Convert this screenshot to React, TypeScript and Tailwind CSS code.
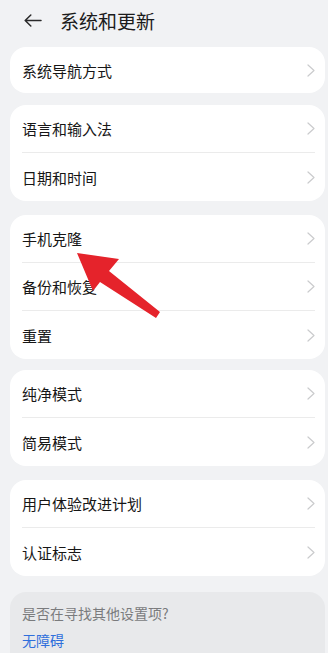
import React from "react";

const groups: string[][] = [
  ["系统导航方式"],
  ["语言和输入法", "日期和时间"],
  ["手机克隆", "备份和恢复", "重置"],
  ["纯净模式", "简易模式"],
  ["用户体验改进计划", "认证标志"],
];

// gap above each card, measured from the screenshot
const gaps = ["mt-0", "mt-[12px]", "mt-[14px]", "mt-[11px]", "mt-[14px]"];

function Chevron() {
  return (
    <svg width="8" height="13" viewBox="0 0 8 13" fill="none" className="shrink-0">
      <polyline
        points="1,1 7,6.5 1,12"
        stroke="#cacbcd"
        strokeWidth="1.2"
        strokeLinecap="round"
        strokeLinejoin="round"
      />
    </svg>
  );
}

function Row({ label, last, first }: { label: string; last: boolean; first: boolean }) {
  return (
    <div className="pl-3 pr-[10px]">
      <div
        className={
          "flex items-center justify-between " +
          (first && last ? "h-[46px] " : "h-[48px] ") +
          (last ? "" : "border-b border-[#ebebeb]")
        }
      >
        <span className="text-[15px] text-[#161616] leading-none">{label}</span>
        <Chevron />
      </div>
    </div>
  );
}

export default function App() {
  return (
    <div
      className="relative w-[328px] h-[653px] overflow-hidden bg-[#f1f2f4] flex flex-col"
      style={{ fontFamily: '"Noto Sans CJK SC", "Noto Sans", sans-serif' }}
    >
      <header className="h-[47px] flex items-center pl-[24px] pb-[6px] gap-[18px] shrink-0">
        <svg width="18" height="13" viewBox="0 0 18 13" fill="none">
          <path
            d="M17 6.5H1.5M6.8 1L1.2 6.5L6.8 12"
            stroke="#2a2a2a"
            strokeWidth="1.5"
            strokeLinecap="round"
            strokeLinejoin="round"
          />
        </svg>
        <h1 className="text-[19px] text-[#1b1b1b] leading-none">系统和更新</h1>
      </header>

      {groups.map((rows, gi) => (
        <div key={gi} className={"ml-[10px] mr-[3px] bg-white rounded-[16px] shrink-0 " + gaps[gi]}>
          {rows.map((label, ri) => (
            <Row key={label} label={label} first={ri === 0} last={ri === rows.length - 1} />
          ))}
        </div>
      ))}

      <div className="ml-[10px] mr-[3px] mt-[16px] flex-1 bg-[#e8e9eb] rounded-t-[16px] px-3 pt-[12px]">
        <p className="text-[14px] text-[#7a7b7d] leading-[18px]">是否在寻找其他设置项?</p>
        <p className="mt-[9px] text-[14px] text-[#2f6fdc] leading-[18px]">无障碍</p>
      </div>

      {/* red annotation arrow over the list */}
      <svg className="absolute left-0 top-0 pointer-events-none" width="328" height="653">
        <polygon
          points="77,253 119,259 109,271 160,312 156,318 100,282 93,291"
          fill="#e5232b"
          strokeLinejoin="round"
        />
      </svg>
    </div>
  );
}
